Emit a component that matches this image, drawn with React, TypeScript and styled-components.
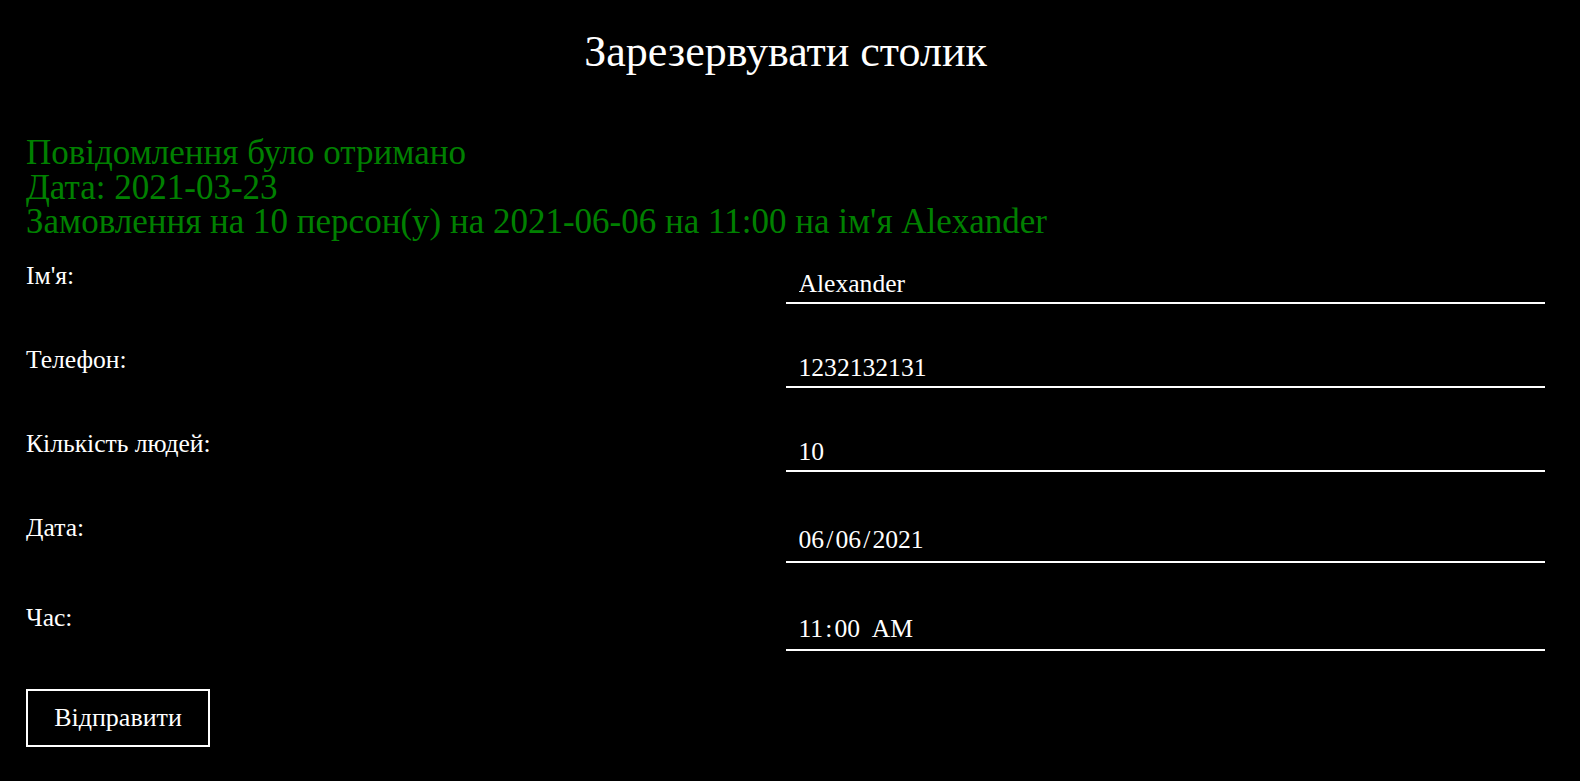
import React from "react";
import styled, { createGlobalStyle } from "styled-components";

const GlobalStyle = createGlobalStyle`
  html, body {
    margin: 0;
    padding: 0;
    background: #000;
    color: #fff;
    font-family: "Liberation Serif", "Times New Roman", serif;
  }
`;

const Page = styled.div`
  min-height: 781px;
  background: #000;
  padding: 0 35px 0 26px;
  box-sizing: border-box;
`;

const Title = styled.h1`
  margin: 0;
  padding-top: 26px;
  font-size: 44px;
  font-weight: 400;
  line-height: normal;
  text-align: center;
`;

const Message = styled.div`
  margin-top: 59px;
  color: #008000;
  font-size: 35px;
  line-height: 34.5px;
`;

const Form = styled.form`
  display: flex;
  flex-direction: column;
  margin-top: 21px;
`;

const Row = styled.div<{ $gap: number }>`
  display: grid;
  grid-template-columns: 1fr 1fr;
  align-items: start;
  margin-bottom: ${(p) => p.$gap}px;
`;

const Label = styled.label`
  font-size: 25.6px;
  line-height: 30px;
`;

const Input = styled.input<{ $pt: number; $pb: number }>`
  display: block;
  width: 100%;
  box-sizing: border-box;
  background: transparent;
  color: #fff;
  border: none;
  border-bottom: 2px solid #fff;
  outline: none;
  font-family: "Liberation Serif", "Times New Roman", serif;
  font-size: 25.6px;
  line-height: 30px;
  height: ${(p) => p.$pt + p.$pb + 32}px;
  padding: ${(p) => p.$pt}px 12px ${(p) => p.$pb}px 13px;
  margin: 0;
`;

const Button = styled.button`
  align-self: flex-start;
  background: #000;
  color: #fff;
  border: 2px solid #fff;
  font-family: "Liberation Serif", "Times New Roman", serif;
  font-size: 26px;
  line-height: 30px;
  width: 184px;
  height: 58px;
  padding: 0;
  cursor: pointer;
`;

type Field = {
  label: string;
  value: string;
  pt: number;
  pb: number;
  gap: number;
};

const fields: Field[] = [
  { label: "Ім'я:", value: "Alexander", pt: 8, pb: 3, gap: 41 },
  { label: "Телефон:", value: "1232132131", pt: 8, pb: 3, gap: 41 },
  { label: "Кількість людей:", value: "10", pt: 8, pb: 3, gap: 41 },
  {
    label: "Дата:",
    value: "06\u200A/\u200A06\u200A/\u200A2021",
    pt: 12,
    pb: 6,
    gap: 40,
  },
  {
    label: "Час:",
    value: "11\u200A:\u200A00\u00a0\u2009AM",
    pt: 11,
    pb: 5,
    gap: 38,
  },
];

export default function App() {
  return (
    <>
      <GlobalStyle />
      <Page>
        <Title>Зарезервувати столик</Title>
        <Message>
          <div>Повідомлення було отримано</div>
          <div>Дата: 2021-03-23</div>
          <div>Замовлення на 10 персон(у) на 2021-06-06 на 11:00 на ім'я Alexander</div>
        </Message>
        <Form onSubmit={(e) => e.preventDefault()}>
          {fields.map((f) => (
            <Row key={f.label} $gap={f.gap}>
              <Label>{f.label}</Label>
              <Input $pt={f.pt} $pb={f.pb} defaultValue={f.value} readOnly />
            </Row>
          ))}
          <Button type="submit">Відправити</Button>
        </Form>
      </Page>
    </>
  );
}
